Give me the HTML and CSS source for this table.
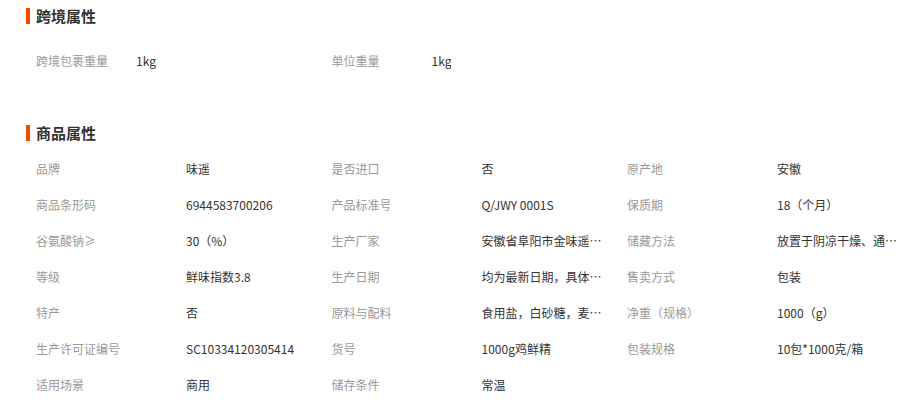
FILE: index.html
```html
<!DOCTYPE html>
<html lang="zh-CN">
<head>
  <meta charset="UTF-8">
  <title>商品属性</title>
  <link rel="stylesheet" href="styles.css">
</head>
<body>
  <div class="attrs">
    <h3 class="attrs-title">跨境属性</h3>
    <ul class="attr-list cross">
      <li><span class="k">跨境包裹重量</span><span class="v">1kg</span></li>
      <li><span class="k">单位重量</span><span class="v">1kg</span></li>
    </ul>

    <h3 class="attrs-title">商品属性</h3>
    <ul class="attr-list">
      <li><span class="k">品牌</span><span class="v">味遥</span></li>
      <li><span class="k">是否进口</span><span class="v">否</span></li>
      <li><span class="k">原产地</span><span class="v">安徽</span></li>
      <li><span class="k">商品条形码</span><span class="v">6944583700206</span></li>
      <li><span class="k">产品标准号</span><span class="v">Q/JWY 0001S</span></li>
      <li><span class="k">保质期</span><span class="v">18（个月）</span></li>
      <li><span class="k">谷氨酸钠≥</span><span class="v">30（%）</span></li>
      <li><span class="k">生产厂家</span><span class="v">安徽省阜阳市金味遥食品有限公司</span></li>
      <li><span class="k">储藏方法</span><span class="v">放置于阴凉干燥、通风处</span></li>
      <li><span class="k">等级</span><span class="v">鲜味指数3.8</span></li>
      <li><span class="k">生产日期</span><span class="v">均为最新日期，具体以实物为准</span></li>
      <li><span class="k">售卖方式</span><span class="v">包装</span></li>
      <li><span class="k">特产</span><span class="v">否</span></li>
      <li><span class="k">原料与配料</span><span class="v">食用盐，白砂糖，麦芽糊精</span></li>
      <li><span class="k">净重（规格）</span><span class="v">1000（g）</span></li>
      <li><span class="k">生产许可证编号</span><span class="v">SC10334120305414</span></li>
      <li><span class="k">货号</span><span class="v">1000g鸡鲜精</span></li>
      <li><span class="k">包装规格</span><span class="v">10包*1000克/箱</span></li>
      <li><span class="k">适用场景</span><span class="v">商用</span></li>
      <li><span class="k">储存条件</span><span class="v">常温</span></li>
    </ul>
  </div>
</body>
</html>
```

FILE: styles.css
```css
body {
  margin: 0;
  background: #fff;
  font-family: "Noto Sans CJK SC", "Liberation Sans", sans-serif;
  color: #333;
}

.attrs {
  padding: 8px 0 0 26px;
}

.attrs-title {
  margin: 0;
  padding-left: 6px;
  border-left: 4px solid #ff4400;
  font-size: 15px;
  line-height: 16px;
  font-weight: bold;
  color: #333;
}

.attr-list {
  list-style: none;
  margin: 9px 0 0 10px;
  padding: 0;
  display: grid;
  grid-template-columns: repeat(3, 295.5px);
  font-size: 12px;
}

.attr-list li {
  display: flex;
  height: 36px;
  align-items: center;
}

.attr-list .k {
  width: 150px;
  flex: none;
  color: #999;
}

.attr-list .v {
  max-width: 124px;
  white-space: nowrap;
  overflow: hidden;
  text-overflow: ellipsis;
  color: #333;
}

.attr-list.cross {
  margin-top: 18px;
  margin-bottom: 47px;
}

.attr-list.cross .k {
  width: 100px;
}
```
